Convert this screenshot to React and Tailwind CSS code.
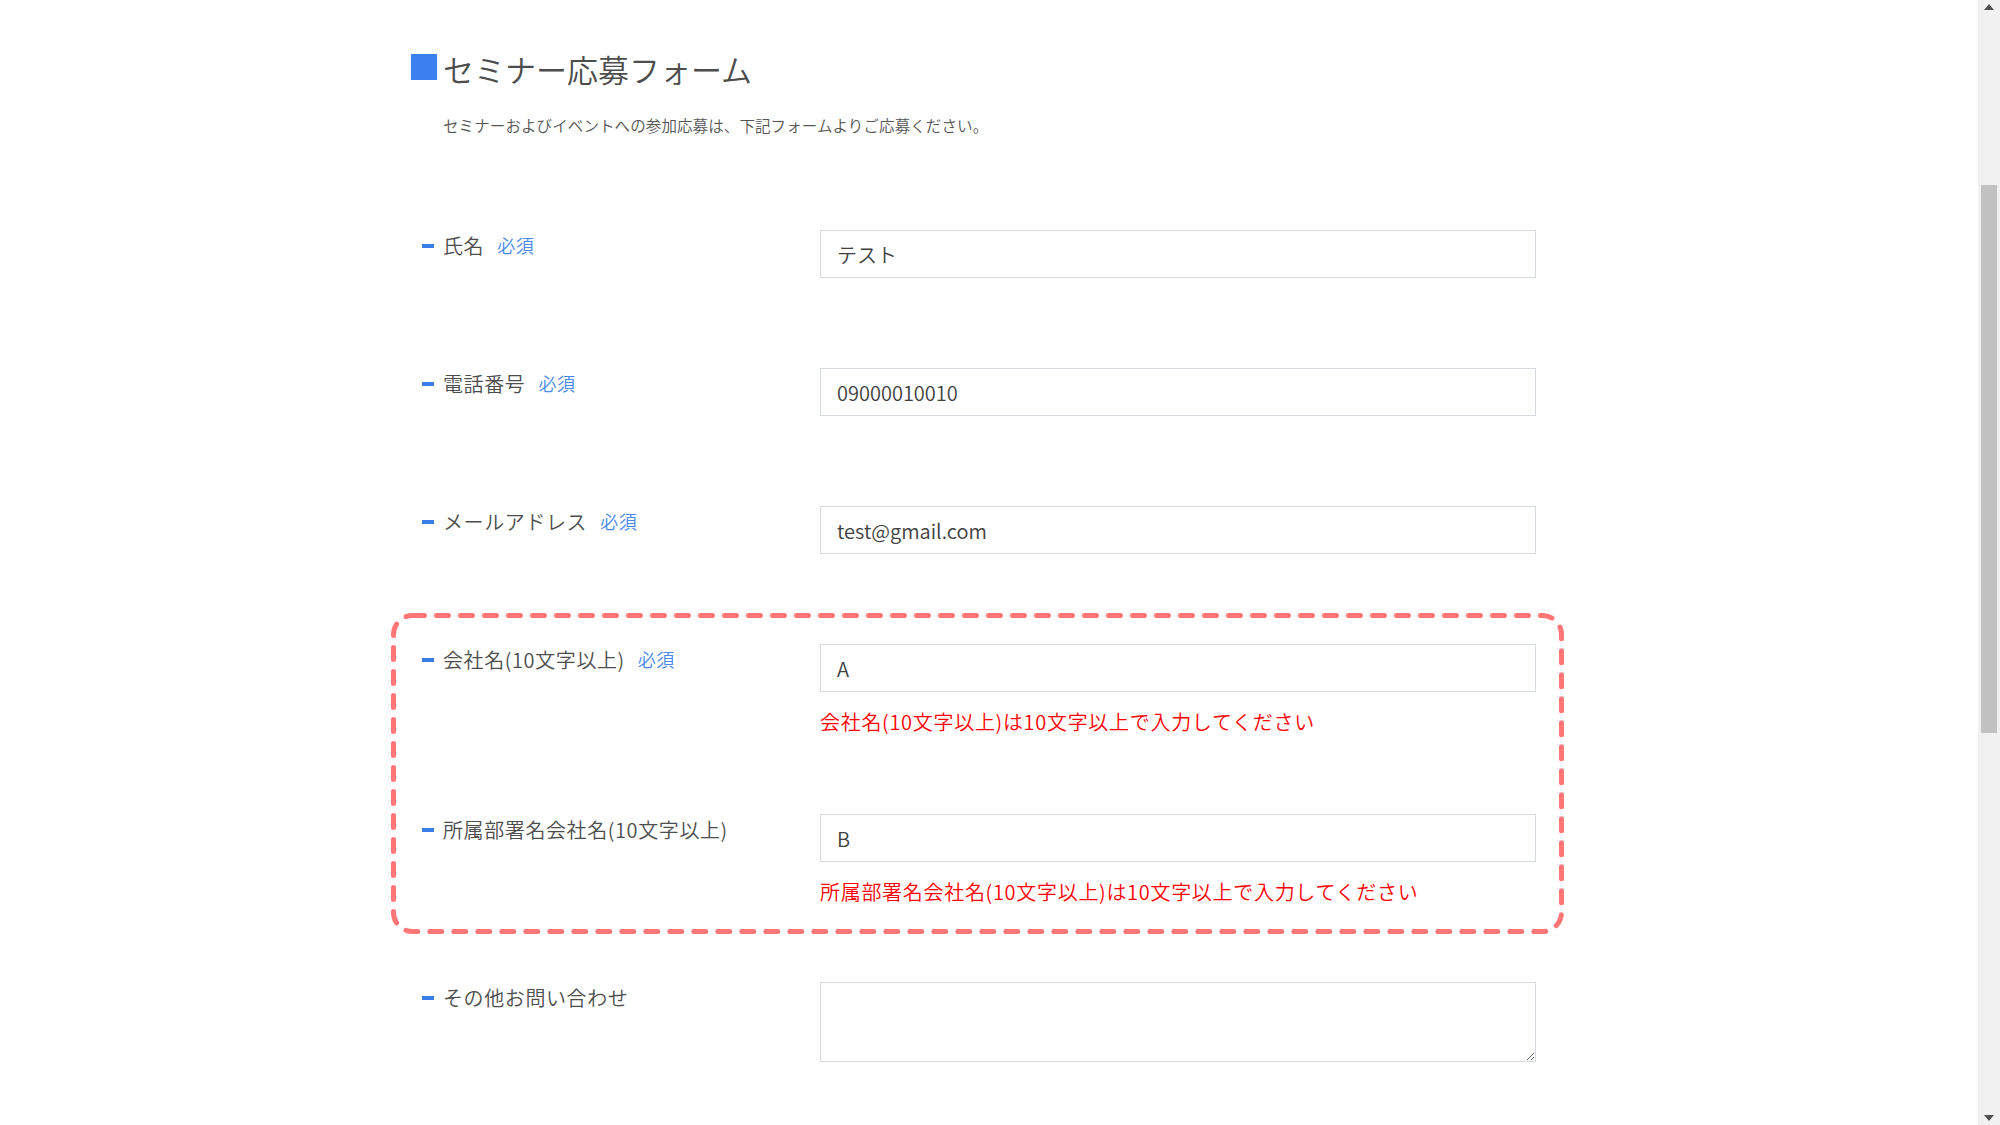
import React from "react";

const FONT = { fontFamily: '"Noto Sans CJK JP", "Noto Sans", sans-serif' };

function Label({ text, required }) {
  return (
    <div className="flex items-center h-[30px] mt-[1px]">
      <span className="w-[12px] h-[4px] bg-[#3b7de6] mr-[9px] shrink-0" />
      <span className="text-[20px] leading-[30px] tracking-[0.6px] font-[350] text-[#4d4d4d]">{text}</span>
      {required && (
        <span className="ml-[13px] text-[18px] leading-[30px] tracking-[0.5px] font-[350] text-[#4a88ee] -mt-[3px]">必須</span>
      )}
    </div>
  );
}

function Row({ label, required, value, error, className = "" }) {
  return (
    <div className={"flex " + className}>
      <div className="w-[398px] shrink-0">
        <Label text={label} required={required} />
      </div>
      <div className="w-[716px] flex flex-col">
        <input
          defaultValue={value}
          readOnly
          className="w-full h-[48px] border border-[#d5dae0] bg-white px-[16px] text-[20px] font-[350] text-[#404040] outline-none"
          style={FONT}
        />
        {error && (
          <div className="mt-[16px] text-[20px] leading-[28px] tracking-[0.7px] font-[350] text-[#ff0000]">{error}</div>
        )}
      </div>
    </div>
  );
}

export default function App() {
  return (
    <div className="flex w-[2000px] h-[1125px] overflow-hidden bg-white" style={FONT}>
      <main className="flex-1 pl-[411px] pt-[47px]">
        <div className="flex items-center h-[40px]">
          <span className="w-[26px] h-[26px] bg-[#3a80ef] shrink-0" />
          <h1 className="ml-[6px] text-[31px] leading-[40px] font-[350] text-[#4d4d4d] mt-[3px]">セミナー応募フォーム</h1>
        </div>
        <p className="ml-[32px] mt-[26px] text-[15.5px] leading-[24px] tracking-[0.1px] font-[350] text-[#555555]">
          セミナーおよびイベントへの参加応募は、下記フォームよりご応募ください。
        </p>

        <div className="ml-[11px] mt-[93px] flex flex-col">
          <Row label="氏名" required value="テスト" className="mb-[90px]" />
          <Row label="電話番号" required value="09000010010" className="mb-[90px]" />
          <Row label="メールアドレス" required value="test@gmail.com" className="mb-[90px]" />

          <div className="relative">
            <svg
              className="absolute top-[-31px] left-[-31px] pointer-events-none"
              width="1173"
              height="321"
              viewBox="0 0 1173 321"
            >
              <rect
                x="2.5"
                y="2.5"
                width="1168"
                height="316"
                rx="19"
                fill="none"
                stroke="#ff7676"
                strokeWidth="5"
                strokeDasharray="12 12"
                strokeLinecap="round"
              />
            </svg>
            <Row
              label="会社名(10文字以上)"
              required
              value="A"
              error="会社名(10文字以上)は10文字以上で入力してください"
              className="mb-[78px]"
            />
            <Row
              label="所属部署名会社名(10文字以上)"
              value="B"
              error="所属部署名会社名(10文字以上)は10文字以上で入力してください"
            />
          </div>

          <div className="flex mt-[76px]">
            <div className="w-[398px] shrink-0">
              <Label text="その他お問い合わせ" />
            </div>
            <textarea
              readOnly
              className="w-[716px] h-[80px] border border-[#d5dae0] bg-white px-[16px] py-[10px] text-[20px] outline-none"
              style={FONT}
            />
          </div>
        </div>
      </main>

      <aside className="w-[22px] h-full bg-[#f1f1f1] flex flex-col items-center shrink-0">
        <div className="h-[14px] flex items-center justify-center">
          <svg width="10" height="6" viewBox="0 0 10 6"><path d="M0 6 L5 0 L10 6 Z" fill="#505050" /></svg>
        </div>
        <div className="mt-[171px] w-[16px] h-[548px] bg-[#c1c1c1]" />
        <div className="flex-1" />
        <div className="h-[14px] flex items-center justify-center">
          <svg width="10" height="6" viewBox="0 0 10 6"><path d="M0 0 L5 6 L10 0 Z" fill="#505050" /></svg>
        </div>
      </aside>
    </div>
  );
}
